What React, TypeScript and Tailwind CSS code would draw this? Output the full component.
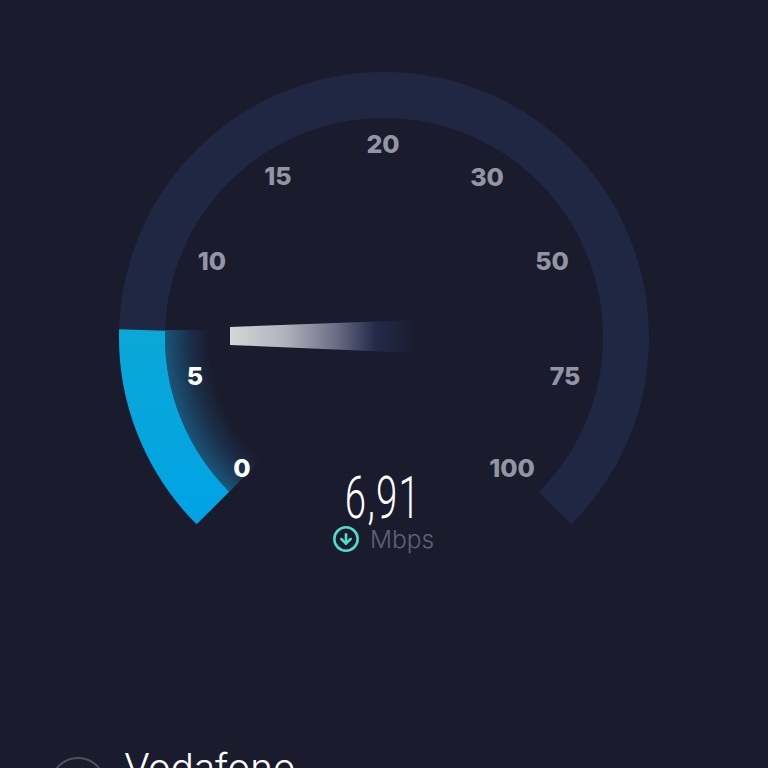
import { CircleArrowDown } from 'lucide-react';

const labels = [
	{ text: '0', pos: 'left-[242px] top-[468px]', active: true },
	{ text: '5', pos: 'left-[195px] top-[376px]', active: true },
	{ text: '10', pos: 'left-[212px] top-[261px]', active: false },
	{ text: '15', pos: 'left-[278px] top-[176px]', active: false },
	{ text: '20', pos: 'left-[383px] top-[144px]', active: false },
	{ text: '30', pos: 'left-[487px] top-[177px]', active: false },
	{ text: '50', pos: 'left-[552px] top-[261px]', active: false },
	{ text: '75', pos: 'left-[565px] top-[376px]', active: false },
	{ text: '100', pos: 'left-[512px] top-[468px]', active: false },
];

function Gauge() {
	return (
		<svg width="768" height="752" viewBox="0 0 768 752" className="block">
			<defs>
				<linearGradient id="blue" x1="0" y1="330" x2="0" y2="523" gradientUnits="userSpaceOnUse">
					<stop offset="0" stopColor="#0aa8d6" />
					<stop offset="1" stopColor="#01a3e6" />
				</linearGradient>
				<radialGradient id="glow" cx="384" cy="337" r="219" gradientUnits="userSpaceOnUse">
					<stop offset="0.8" stopColor="#1a1c2e" />
					<stop offset="0.89" stopColor="#1a304a" />
					<stop offset="1" stopColor="#1a5578" />
				</radialGradient>
				<linearGradient id="needle" x1="230" y1="0" x2="417" y2="0" gradientUnits="userSpaceOnUse">
					<stop offset="0" stopColor="#d6d6da" />
					<stop offset="0.3" stopColor="#b0b1bb" />
					<stop offset="0.55" stopColor="#6f7288" />
					<stop offset="0.78" stopColor="#232a48" />
					<stop offset="1" stopColor="#1a1c2e" />
				</linearGradient>
			</defs>
			<path d="M212.9 508.1 A242 242 0 1 1 555.1 508.1" fill="none" stroke="#1f2742" strokeWidth="46" />
			<path d="M165.1 330 A219 219 0 0 0 229.1 491.9 L264 457 A170 170 0 0 1 214 330 Z" fill="url(#glow)" />
			<path d="M142.1 330 A242 242 0 0 0 212.9 508.1" fill="none" stroke="url(#blue)" strokeWidth="46" />
			<polygon points="230,327 417,320 417,353 230,345" fill="url(#needle)" />
		</svg>
	);
}

export default function App() {
	return (
		<div className="w-[768px] h-[768px] overflow-hidden bg-[#1a1c2e] font-['Inter',sans-serif]">
			<div className="relative h-[752px]">
				<Gauge />
				{labels.map((l) => (
					<span
						key={l.text}
						className={`absolute ${l.pos} -translate-x-1/2 -translate-y-1/2 text-[25px] leading-none font-extrabold ${
							l.active ? 'text-white' : 'text-[#9495a3]'
						}`}>
						{l.text}
					</span>
				))}
				<div className="absolute left-[383px] top-[498px] -translate-x-1/2 -translate-y-1/2 scale-x-[0.64] font-['Roboto',sans-serif] font-light text-[60px] tracking-[2px] leading-[46px] text-white whitespace-nowrap">
					6,91
				</div>
				<div className="absolute left-[332px] top-[525px] flex items-center gap-[10px]">
					<CircleArrowDown size={28} strokeWidth={2.2} className="text-[#4fdccb]" />
					<span className="text-[24.5px] leading-[28px] font-light text-[#5f6174]">Mbps</span>
				</div>
			</div>
			<div className="flex items-start pl-[50px] gap-[18px]">
				<div className="mt-[5px] w-[56px] h-[56px] shrink-0 rounded-full border-2 border-[#50525f]" />
				<div className="-mt-[5px] text-[38.5px] leading-[40px] font-light text-white">Vodafone</div>
			</div>
		</div>
	);
}
